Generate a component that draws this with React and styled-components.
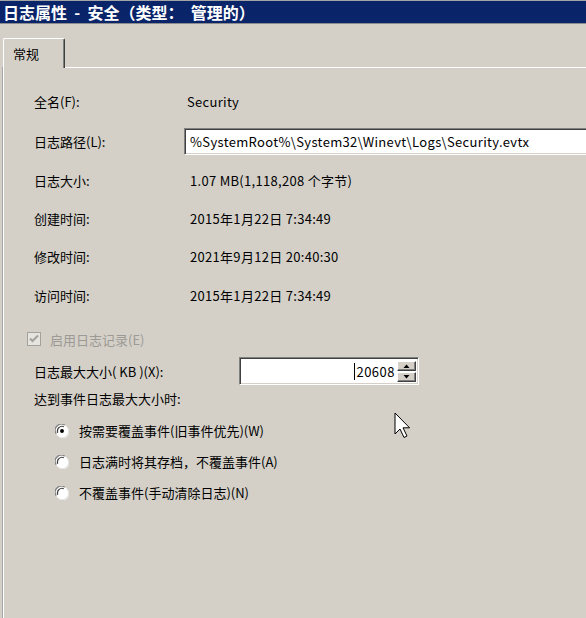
import styled, { createGlobalStyle } from "styled-components";

const GlobalStyle = createGlobalStyle`
  html, body {
    margin: 0;
    padding: 0;
    background: #d4d0c8;
  }
  body {
    font-family: "Noto Sans CJK SC", "Noto Sans", sans-serif;
    font-size: 13px;
    color: #000;
    overflow: hidden;
  }
`;

const Window = styled.div`
  position: relative;
  width: 586px;
  height: 618px;
  display: flex;
  flex-direction: column;
  overflow: hidden;
  background: #d4d0c8;
`;

const TitleBar = styled.div`
  height: 22px;
  border-top: 1px solid #a4a4a4;
  border-bottom: 1px solid #8c8c8c;
  background: #0a246a;
  color: #fff;
  font-weight: 700;
  font-size: 16px;
  display: flex;
  align-items: center;
  padding-left: 3px;
  white-space: pre;
`;

const TabStrip = styled.div`
  height: 43px;
  display: flex;
  align-items: flex-end;
  padding-left: 3px;
`;

const Tab = styled.div`
  position: relative;
  z-index: 1;
  width: 62px;
  height: 30px;
  margin-bottom: -1px;
  padding-left: 9px;
  box-sizing: border-box;
  display: flex;
  align-items: center;
  background: #d4d0c8;
  border-top: 1px solid #fff;
  border-left: 1px solid #fff;
  border-right: 1px solid #404040;
  border-top-left-radius: 2px;
  border-top-right-radius: 2px;
  box-shadow: inset -1px 0 0 #808080;
`;

const Panel = styled.div`
  flex: 1;
  margin-left: 3px;
  padding-top: 14px;
  border-top: 1px solid #fff;
  border-left: 1px solid #fff;
  box-shadow: -1px 0 0 #a8a8a8;
`;

const InfoRow = styled.div`
  height: ${(p) => p.$h}px;
  display: grid;
  grid-template-columns: 150px 1fr;
  align-items: center;
  padding-left: 30px;
`;

const Value = styled.div`
  padding-left: ${(p) => p.$indent ?? 6}px;
  white-space: nowrap;
  letter-spacing: 0.3px;
`;

const sunken = `
  border-top: 1px solid #808080;
  border-left: 1px solid #808080;
  border-bottom: 1px solid #fff;
  border-right: 1px solid #fff;
  box-shadow: inset 1px 1px 0 #404040, inset -1px -1px 0 #d4d0c8;
  background: #fff;
  box-sizing: border-box;
`;

const PathBox = styled.div`
  ${sunken}
  height: 27px;
  margin-right: -30px;
  padding-left: 5px;
  display: flex;
  align-items: center;
  white-space: nowrap;
  overflow: hidden;
  letter-spacing: 0.34px;
`;

const CheckRow = styled.div`
  height: 26px;
  margin-top: 11px;
  padding-left: 23px;
  display: flex;
  align-items: center;
  gap: 9px;
  color: #9c9a94;
`;

const SizeRow = styled.div`
  height: 28px;
  margin-top: 5px;
  padding-left: 30px;
  display: grid;
  grid-template-columns: 205px 180px;
  align-items: center;
`;

const Spinner = styled.div`
  ${sunken}
  height: 28px;
  display: flex;
  align-items: center;
  padding: 2px 2px 2px 0;
`;

const SpinText = styled.div`
  flex: 1;
  display: flex;
  justify-content: flex-end;
  align-items: center;
  padding-right: 2px;
  letter-spacing: 0.5px;
`;

const Caret = styled.span`
  width: 1px;
  height: 17px;
  background: #000;
  margin-right: 1px;
`;

const SpinButtons = styled.div`
  width: 19px;
  height: 21px;
  display: flex;
  flex-direction: column;
  gap: 1px;
`;

const SpinButton = styled.div`
  flex: 1;
  display: flex;
  align-items: center;
  justify-content: center;
  background: #d4d0c8;
  border-top: 1px solid #fff;
  border-left: 1px solid #fff;
  border-right: 1px solid #404040;
  border-bottom: 1px solid #404040;
  box-shadow: inset -1px -1px 0 #808080;
  box-sizing: border-box;
`;

const PlainRow = styled.div`
  height: 26px;
  padding-left: 30px;
  display: flex;
  align-items: center;
`;

const RadioGroup = styled.div`
  margin-top: 4px;
  display: flex;
  flex-direction: column;
`;

const RadioRow = styled.div`
  height: 31px;
  padding-left: 51px;
  display: flex;
  align-items: center;
  gap: 10px;
`;

const Pointer = styled.svg`
  position: absolute;
  left: 394px;
  top: 412px;
`;

function CheckBox() {
  return (
    <svg width="14" height="14" viewBox="0 0 14 14">
      <rect x="0.5" y="0.5" width="13" height="13" fill="#e6e4df" stroke="#a3a19b" />
      <path d="M3 6.5 L5.5 9 L11 3.5" fill="none" stroke="#a3a19b" strokeWidth="2" />
    </svg>
  );
}

function Radio({ checked }) {
  return (
    <svg width="14" height="14" viewBox="0 0 13 13">
      <circle cx="6.5" cy="6.5" r="6" fill="#fff" />
      <path d="M1.2 9 A5.6 5.6 0 0 1 9 1.2" fill="none" stroke="#808080" strokeWidth="1.1" />
      <path d="M2.5 8.2 A4.4 4.4 0 0 1 8.2 2.5" fill="none" stroke="#404040" strokeWidth="1" />
      <path d="M11.8 4 A5.6 5.6 0 0 1 4 11.8" fill="none" stroke="#e8e8e8" strokeWidth="1.1" />
      {checked && <circle cx="6.5" cy="6.5" r="1.8" fill="#000" />}
    </svg>
  );
}

function Arrow({ up }) {
  return (
    <svg width="7" height="4" viewBox="0 0 7 4">
      <path d={up ? "M0.5 4 L3.5 0.5 L6.5 4 Z" : "M0.5 0 L3.5 3.5 L6.5 0 Z"} fill="#000" />
    </svg>
  );
}

const infoRows = [
  ["全名(F):", "Security", 3, 39],
  ["日志路径(L):", null, 0, 40],
  ["日志大小:", "1.07 MB(1,118,208 个字节)", 6, 38],
  ["创建时间:", "2015年1月22日 7:34:49", 6, 38],
  ["修改时间:", "2021年9月12日 20:40:30", 6, 39],
  ["访问时间:", "2015年1月22日 7:34:49", 6, 39],
];

const options = [
  ["按需要覆盖事件(旧事件优先)(W)", true],
  ["日志满时将其存档，不覆盖事件(A)", false],
  ["不覆盖事件(手动清除日志)(N)", false],
];

export default function App() {
  return (
    <Window>
      <GlobalStyle />
      <TitleBar>日志属性  -  安全（类型：  管理的）</TitleBar>
      <TabStrip>
        <Tab>常规</Tab>
      </TabStrip>
      <Panel>
        {infoRows.map(([label, value, indent, h]) => (
          <InfoRow key={label} $h={h}>
            <span>{label}</span>
            {value === null ? (
              <PathBox>%SystemRoot%\System32\Winevt\Logs\Security.evtx</PathBox>
            ) : (
              <Value $indent={indent}>{value}</Value>
            )}
          </InfoRow>
        ))}
        <CheckRow>
          <CheckBox />
          <span>启用日志记录(E)</span>
        </CheckRow>
        <SizeRow>
          <span>日志最大大小( KB )(X):</span>
          <Spinner>
            <SpinText>
              <Caret />
              20608
            </SpinText>
            <SpinButtons>
              <SpinButton>
                <Arrow up />
              </SpinButton>
              <SpinButton>
                <Arrow />
              </SpinButton>
            </SpinButtons>
          </Spinner>
        </SizeRow>
        <PlainRow>达到事件日志最大大小时:</PlainRow>
        <RadioGroup>
          {options.map(([text, checked]) => (
            <RadioRow key={text}>
              <Radio checked={checked} />
              <span>{text}</span>
            </RadioRow>
          ))}
        </RadioGroup>
      </Panel>
      <Pointer width="17" height="27" viewBox="0 0 17 27">
        <path
          d="M1 1 L1 22 L6 17 L10 25.5 L13 24 L9 15.8 L15.6 15.8 Z"
          fill="#fff"
          stroke="#000"
          strokeWidth="1"
          strokeLinejoin="miter"
        />
      </Pointer>
    </Window>
  );
}
